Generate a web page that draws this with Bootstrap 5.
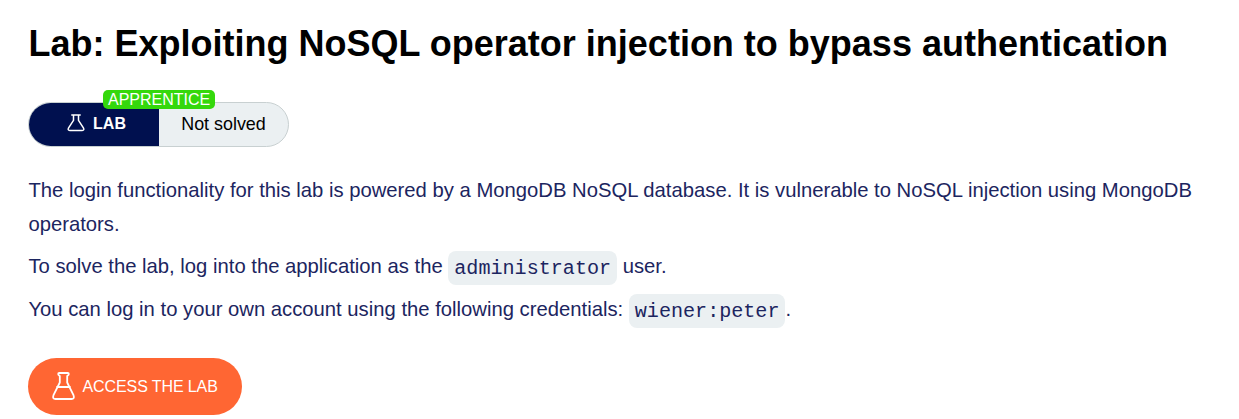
<!DOCTYPE html>
<html lang="en">
<head>
<meta charset="utf-8">
<meta name="viewport" content="width=device-width, initial-scale=1">
<title>Lab: Exploiting NoSQL operator injection to bypass authentication</title>
<link href="https://cdn.jsdelivr.net/npm/bootstrap@5.3.0/dist/css/bootstrap.min.css" rel="stylesheet">
<style>
body{font-family:"Liberation Sans",Arial,sans-serif;color:#1c2560;background:#fff;overflow:hidden}
.lab-page{padding:22px 28px 0}
.lab-title{font-size:36px;line-height:44px;color:#000;white-space:nowrap;padding-left:.5px}
.lab-status{width:261px;height:45px;margin-top:36px;border:1px solid #c8d0d1;background:#ebf0f2;color:#000;line-height:20px}
.lab-kind{width:130px;background:#00104f;color:#fff;gap:8px;padding:0 0 2px 5px;font-size:16px}
.lab-kind svg{margin-top:-1px}
.lab-state{font-size:17.9px;padding-bottom:1px}
.lab-level{position:absolute;left:74px;top:-13px;height:19px;line-height:19px;padding:0 5px;border-radius:5px;background:#34d80c;color:#fff;font-size:16px}
.lab-text{margin-top:26px;font-size:20.25px;line-height:34px;padding-left:.4px}
.lab-text p{margin-bottom:9px}
.lab-text p:first-child{margin-bottom:8px}
.lab-text code{font-family:"Liberation Mono","Courier New",monospace;font-size:20.1px;line-height:1;vertical-align:0;color:inherit;background:#ebf0f2;border-radius:8px;padding:5.5px 6px}
.lab-access{width:214px;height:57px;margin-top:32px;background:#f63;color:#fff;font-size:16px;letter-spacing:-.1px;gap:7.5px;padding:0 0 0 24px;border:0}
.lab-access svg{margin-top:-2px}
</style>
</head>
<body>
<main class="lab-page">
  <h1 class="lab-title fw-bold mb-0">Lab: Exploiting NoSQL operator injection to bypass authentication</h1>
  <div class="lab-status d-flex position-relative rounded-pill">
    <div class="lab-kind d-flex align-items-center justify-content-center rounded-start-pill fw-bold">
      <svg width="18" height="18" viewBox="0 0 18 18" fill="none" stroke="#fff" stroke-width="1.5" stroke-linejoin="round" stroke-linecap="round"><path d="M4.8 1h8.4M6.500 1.400v5L1.600 13.900q-1.300 2.500 1.200 2.500h12.400q2.500 0 1.200-2.500L11.500 6.400v-5"/></svg>
      <span>LAB</span>
    </div>
    <div class="lab-state flex-fill d-flex align-items-center justify-content-center">Not solved</div>
    <span class="lab-level">APPRENTICE</span>
  </div>
  <div class="lab-text">
    <p>The login functionality for this lab is powered by a MongoDB NoSQL database. It is vulnerable to NoSQL injection using MongoDB operators.</p>
    <p>To solve the lab, log into the application as the <code>administrator</code> user.</p>
    <p>You can log in to your own account using the following credentials: <code>wiener:peter</code>.</p>
  </div>
  <a href="#" class="lab-access btn rounded-pill d-flex align-items-center">
    <svg width="23" height="28" viewBox="0 0 23 28" fill="none" stroke="#fff" stroke-width="1.8" stroke-linejoin="round" stroke-linecap="round"><path d="M7.200 1h8.600q1 0 1 1t-1 1.600l-.6.4v6.500l6.300 12.700q1.300 3.800-2 3.800h-16q-3.300 0-2-3.800L7.800 10.500V4l-.6-.4Q6.200 3 6.200 2t1-1zM5 15h13"/></svg>
    <span>ACCESS THE LAB</span>
  </a>
</main>
<script src="https://cdn.jsdelivr.net/npm/bootstrap@5.3.0/dist/js/bootstrap.bundle.min.js"></script>
</body>
</html>
